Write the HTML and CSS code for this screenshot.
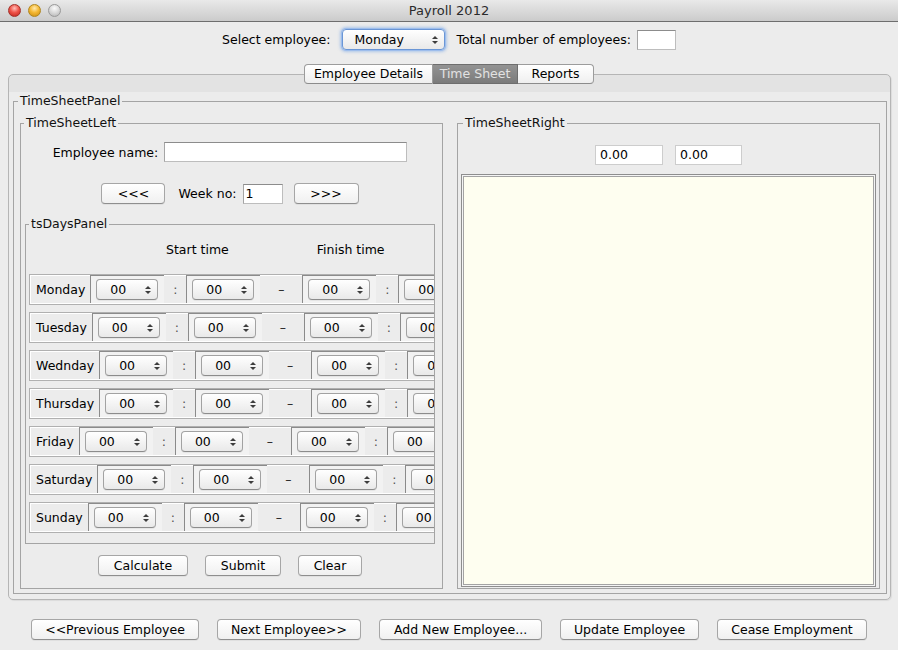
FILE: index.html
```html
<!DOCTYPE html>
<html lang="en">
<head>
<meta charset="utf-8">
<title>Payroll 2012</title>
<link rel="stylesheet" href="styles.css">
</head>
<body>
<header class="titlebar">
  <div class="lights"><span class="light red"></span><span class="light yellow"></span><span class="light gray"></span></div>
  <div class="title">Payroll 2012</div>
  <div></div>
</header>

<div class="topbar">
  <span>Select employee:</span>
  <div class="combo combo-top focus"><span>Monday</span><i class="arr"></i></div>
  <span class="lbl-total">Total number of employees:</span>
  <div class="field field-total"></div>
</div>

<nav class="tabstrip">
  <div class="tab t1">Employee Details</div><div class="tab t2 selected">Time Sheet</div><div class="tab t3">Reports</div>
</nav>

<div class="tabpane">
  <fieldset class="tb panel">
    <legend>TimeSheetPanel</legend>

    <fieldset class="tb left">
      <legend>TimeSheetLeft</legend>
      <div class="name-row">
        <span>Employee name:</span>
        <div class="field name-field"></div>
      </div>
      <div class="week-row">
        <div class="btn nav-btn">&lt;&lt;&lt;</div>
        <span class="week-lbl">Week no:</span>
        <div class="field week-field">1</div>
        <div class="btn nav-btn next">&gt;&gt;&gt;</div>
      </div>

      <fieldset class="tb days">
        <legend>tsDaysPanel</legend>
        <div class="days-head"><span class="h-start">Start time</span><span class="h-finish">Finish time</span></div>
        <div class="rows">
          <div class="day"><span class="dname">Monday</span>
            <div class="slot"><div class="combo"><span>00</span><i class="arr"></i></div></div><span class="sep">:</span>
            <div class="slot"><div class="combo"><span>00</span><i class="arr"></i></div></div><span class="sep dash">–</span>
            <div class="slot"><div class="combo"><span>00</span><i class="arr"></i></div></div><span class="sep">:</span>
            <div class="slot"><div class="combo"><span>00</span><i class="arr"></i></div></div>
          </div>
          <div class="day"><span class="dname">Tuesday</span>
            <div class="slot"><div class="combo"><span>00</span><i class="arr"></i></div></div><span class="sep">:</span>
            <div class="slot"><div class="combo"><span>00</span><i class="arr"></i></div></div><span class="sep dash">–</span>
            <div class="slot"><div class="combo"><span>00</span><i class="arr"></i></div></div><span class="sep">:</span>
            <div class="slot"><div class="combo"><span>00</span><i class="arr"></i></div></div>
          </div>
          <div class="day"><span class="dname">Wednday</span>
            <div class="slot"><div class="combo"><span>00</span><i class="arr"></i></div></div><span class="sep">:</span>
            <div class="slot"><div class="combo"><span>00</span><i class="arr"></i></div></div><span class="sep dash">–</span>
            <div class="slot"><div class="combo"><span>00</span><i class="arr"></i></div></div><span class="sep">:</span>
            <div class="slot"><div class="combo"><span>00</span><i class="arr"></i></div></div>
          </div>
          <div class="day"><span class="dname">Thursday</span>
            <div class="slot"><div class="combo"><span>00</span><i class="arr"></i></div></div><span class="sep">:</span>
            <div class="slot"><div class="combo"><span>00</span><i class="arr"></i></div></div><span class="sep dash">–</span>
            <div class="slot"><div class="combo"><span>00</span><i class="arr"></i></div></div><span class="sep">:</span>
            <div class="slot"><div class="combo"><span>00</span><i class="arr"></i></div></div>
          </div>
          <div class="day"><span class="dname">Friday</span>
            <div class="slot"><div class="combo"><span>00</span><i class="arr"></i></div></div><span class="sep">:</span>
            <div class="slot"><div class="combo"><span>00</span><i class="arr"></i></div></div><span class="sep dash">–</span>
            <div class="slot"><div class="combo"><span>00</span><i class="arr"></i></div></div><span class="sep">:</span>
            <div class="slot"><div class="combo"><span>00</span><i class="arr"></i></div></div>
          </div>
          <div class="day"><span class="dname">Saturday</span>
            <div class="slot"><div class="combo"><span>00</span><i class="arr"></i></div></div><span class="sep">:</span>
            <div class="slot"><div class="combo"><span>00</span><i class="arr"></i></div></div><span class="sep dash">–</span>
            <div class="slot"><div class="combo"><span>00</span><i class="arr"></i></div></div><span class="sep">:</span>
            <div class="slot"><div class="combo"><span>00</span><i class="arr"></i></div></div>
          </div>
          <div class="day"><span class="dname">Sunday</span>
            <div class="slot"><div class="combo"><span>00</span><i class="arr"></i></div></div><span class="sep">:</span>
            <div class="slot"><div class="combo"><span>00</span><i class="arr"></i></div></div><span class="sep dash">–</span>
            <div class="slot"><div class="combo"><span>00</span><i class="arr"></i></div></div><span class="sep">:</span>
            <div class="slot"><div class="combo"><span>00</span><i class="arr"></i></div></div>
          </div>
        </div>
      </fieldset>

      <div class="btn-row">
        <div class="btn b-calc">Calculate</div>
        <div class="btn b-submit">Submit</div>
        <div class="btn b-clear">Clear</div>
      </div>
    </fieldset>

    <fieldset class="tb right">
      <legend>TimeSheetRight</legend>
      <div class="totals">
        <div class="field ro f1">0.00</div>
        <div class="field ro f2">0.00</div>
      </div>
      <div class="textarea"><div class="textarea-inner"></div></div>
    </fieldset>
  </fieldset>
</div>

<div class="bottombar">
  <div class="btn bb1">&lt;&lt;Previous Employee</div>
  <div class="btn bb2">Next Employee&gt;&gt;</div>
  <div class="btn bb3">Add New Employee...</div>
  <div class="btn bb4">Update Employee</div>
  <div class="btn bb5">Cease Employment</div>
</div>
</body>
</html>
```

FILE: styles.css
```css
* { box-sizing: border-box; }
html, body { margin: 0; padding: 0; }
body {
  width: 898px;
  height: 650px;
  overflow: hidden;
  background: #ececec;
  font-family: "DejaVu Sans", "Liberation Sans", sans-serif;
  font-size: 12.5px;
  color: #000;
}

/* title bar */
.titlebar {
  height: 22px;
  border-bottom: 1px solid #6e6e6e;
  background: linear-gradient(#e9e9e9, #cbcbcb);
  display: grid;
  grid-template-columns: 1fr auto 1fr;
  align-items: center;
}
.lights { display: flex; gap: 7px; padding-left: 8px; }
.light { width: 13px; height: 13px; border-radius: 50%; }
.red { background: radial-gradient(circle at 50% 30%, #ffc0ba 0, #f0564c 45%, #bd2119 100%); border: 1px solid #a3302a; }
.yellow { background: radial-gradient(circle at 50% 30%, #ffeab0 0, #f5b934 45%, #c98a0e 100%); border: 1px solid #b0861d; }
.gray { background: radial-gradient(circle at 50% 30%, #fbfbfb 0, #d8d8d8 50%, #b0b0b0 100%); border: 1px solid #999; }
.title { font-size: 13px; color: #2b2b2b; }

/* top bar */
.topbar {
  display: flex;
  justify-content: center;
  align-items: center;
  height: 21px;
  margin-top: 7px;
}
.combo-top { width: 103px; margin-left: 11px; }
.lbl-total { margin-left: 12px; }
.field-total { width: 39px; margin-left: 6px; }

/* tabs */
.tabstrip {
  display: flex;
  justify-content: center;
  height: 20px;
  margin-top: 14px;
  margin-bottom: -10px;
  position: relative;
  z-index: 1;
}
.tab {
  height: 20px;
  line-height: 18px;
  text-align: center;
  border: 1px solid #9c9c9c;
  border-bottom-color: #8c8c8c;
  background: linear-gradient(#ffffff, #efefef);
}
.tab + .tab { border-left: none; }
.t1 { width: 129px; border-radius: 4px 0 0 4px; }
.t2 { width: 85px; }
.t3 { width: 76px; border-radius: 0 4px 4px 0; }
.tab.selected {
  background: linear-gradient(#939393, #7b7b7b);
  color: #e2e2e2;
  border-color: #6e6e6e;
}

/* tab pane */
.tabpane {
  margin: 0 7px 0 8px;
  height: 526px;
  border: 1px solid #b5b5b5;
  border-radius: 5px;
  background: linear-gradient(#e3e3e3, #e3e3e3) top / 100% 17px no-repeat, #ececec;
  box-shadow: 1px 1px 1px rgba(0, 0, 0, 0.07);
  padding: 19px 3px 5px 4px;
  display: flex;
  flex-direction: column;
}

/* titled borders */
fieldset.tb {
  margin: 0;
  min-width: 0;
  border: 1px solid #a4a4a4;
}
fieldset.tb > legend {
  padding: 0 2px;
  line-height: 14px;
  font-size: 12.5px;
  color: #111;
}
fieldset.panel {
  flex: 1;
  padding: 8px 6px 4px 6px;
  display: grid;
  grid-template-columns: 1fr 1fr;
  column-gap: 14px;
}
fieldset.panel > legend { margin-left: -2px; }

fieldset.left {
  padding: 0 7px 0 4px;
  display: flex;
  flex-direction: column;
}
fieldset.left > legend { margin-left: -1px; }

.name-row {
  display: flex;
  justify-content: center;
  align-items: center;
  gap: 6px;
  height: 20px;
  margin-top: 12px;
}
.name-field { width: 243px; }

.week-row {
  display: flex;
  justify-content: center;
  align-items: center;
  height: 21px;
  margin-top: 21px;
}
.nav-btn { width: 64px; }
.week-lbl { margin-left: 13px; }
.week-field { width: 40px; margin-left: 6px; }
.next { width: 65px; margin-left: 11px; }

/* days */
fieldset.days {
  margin-top: 13px;
  padding: 0 0 10px 3px;
}
fieldset.days > legend { margin-left: 0; }
.days-head {
  height: 15px;
  line-height: 15px;
  margin-top: 11px;
  display: flex;
}
.h-start { margin-left: 137px; }
.h-finish { margin-left: 88px; }
.rows {
  margin-top: 17px;
  overflow: hidden;
  display: flex;
  flex-direction: column;
  gap: 7px;
}
.day {
  flex: none;
  width: 470px;
  height: 31px;
  display: flex;
  align-items: flex-start;
  gap: 5px;
  padding-left: 6px;
  border: 1px solid #b0b0b0;
  box-shadow: inset 1px 1px 0 #fff, inset -1px -1px 0 #fff;
}
.dname { line-height: 29px; }
.slot {
  flex: none;
  width: 74px;
  height: 28px;
  border-top: 1px solid #8b8b8b;
  border-left: 1px solid #8b8b8b;
  background: #f2f2f2;
  padding: 3px 0 0 5px;
}
.slot .combo { width: 62px; padding-left: 13px; }
.sep { flex: none; width: 12px; text-align: center; line-height: 29px; color: #555; }
.sep.dash { width: 32px; color: #222; }

/* combo box */
.combo {
  display: flex;
  align-items: center;
  height: 21px;
  padding: 0 6px 0 12px;
  border: 1px solid #a2a2a2;
  border-bottom-color: #8c8c8c;
  border-radius: 4px;
  background: linear-gradient(#ffffff, #f4f4f4 50%, #e9e9e9);
  box-shadow: 0 1px 0 rgba(0, 0, 0, 0.05);
}
.combo.focus {
  border-color: #6a96d6;
  box-shadow: 0 0 0 1px #9dbdec, 0 0 3px 2px rgba(120, 165, 230, 0.55);
}
.arr {
  margin-left: auto;
  display: flex;
  flex-direction: column;
  gap: 2px;
}
.arr::before {
  content: "";
  border-left: 3px solid transparent;
  border-right: 3px solid transparent;
  border-bottom: 3px solid #3d3d3d;
}
.arr::after {
  content: "";
  border-left: 3px solid transparent;
  border-right: 3px solid transparent;
  border-top: 3px solid #3d3d3d;
}

/* text fields */
.field {
  height: 20px;
  line-height: 18px;
  padding: 0 2px;
  background: #fff;
  border: 1px solid #bdbdbd;
  border-top-color: #8c8c8c;
  border-left-color: #a5a5a5;
}
.field.ro {
  border-color: #cdcdcd;
  padding-left: 4px;
}

/* buttons */
.btn {
  height: 21px;
  display: flex;
  align-items: center;
  justify-content: center;
  border: 1px solid #a6a6a6;
  border-bottom-color: #8e8e8e;
  border-radius: 4px;
  background: linear-gradient(#ffffff, #f0f0f0);
  box-shadow: 0 1px 0 rgba(0, 0, 0, 0.05);
  white-space: nowrap;
}

.btn-row {
  display: flex;
  justify-content: center;
  gap: 17px;
  margin-top: 11px;
}
.b-calc { width: 90px; }
.b-submit { width: 76px; }
.b-clear { width: 64px; }

/* right side */
fieldset.right {
  padding: 0 3px 1px 3px;
  display: flex;
  flex-direction: column;
}
fieldset.right > legend { margin-left: 2px; }
.totals {
  display: flex;
  justify-content: center;
  gap: 12px;
  margin-top: 15px;
}
.f1 { width: 68px; }
.f2 { width: 67px; }
.textarea {
  flex: 1;
  margin-top: 9px;
  border: 1px solid #8e8e8e;
  padding: 1px;
  background: #f4f4f4;
  display: flex;
}
.textarea-inner {
  flex: 1;
  border: 1px solid #a3a3a3;
  background: #fefef0;
}

/* bottom buttons */
.bottombar {
  display: flex;
  justify-content: center;
  gap: 18px;
  margin-top: 19px;
}
.bb1 { width: 168px; }
.bb2 { width: 144px; }
.bb3 { width: 163px; }
.bb4 { width: 139px; }
.bb5 { width: 150px; }
```
